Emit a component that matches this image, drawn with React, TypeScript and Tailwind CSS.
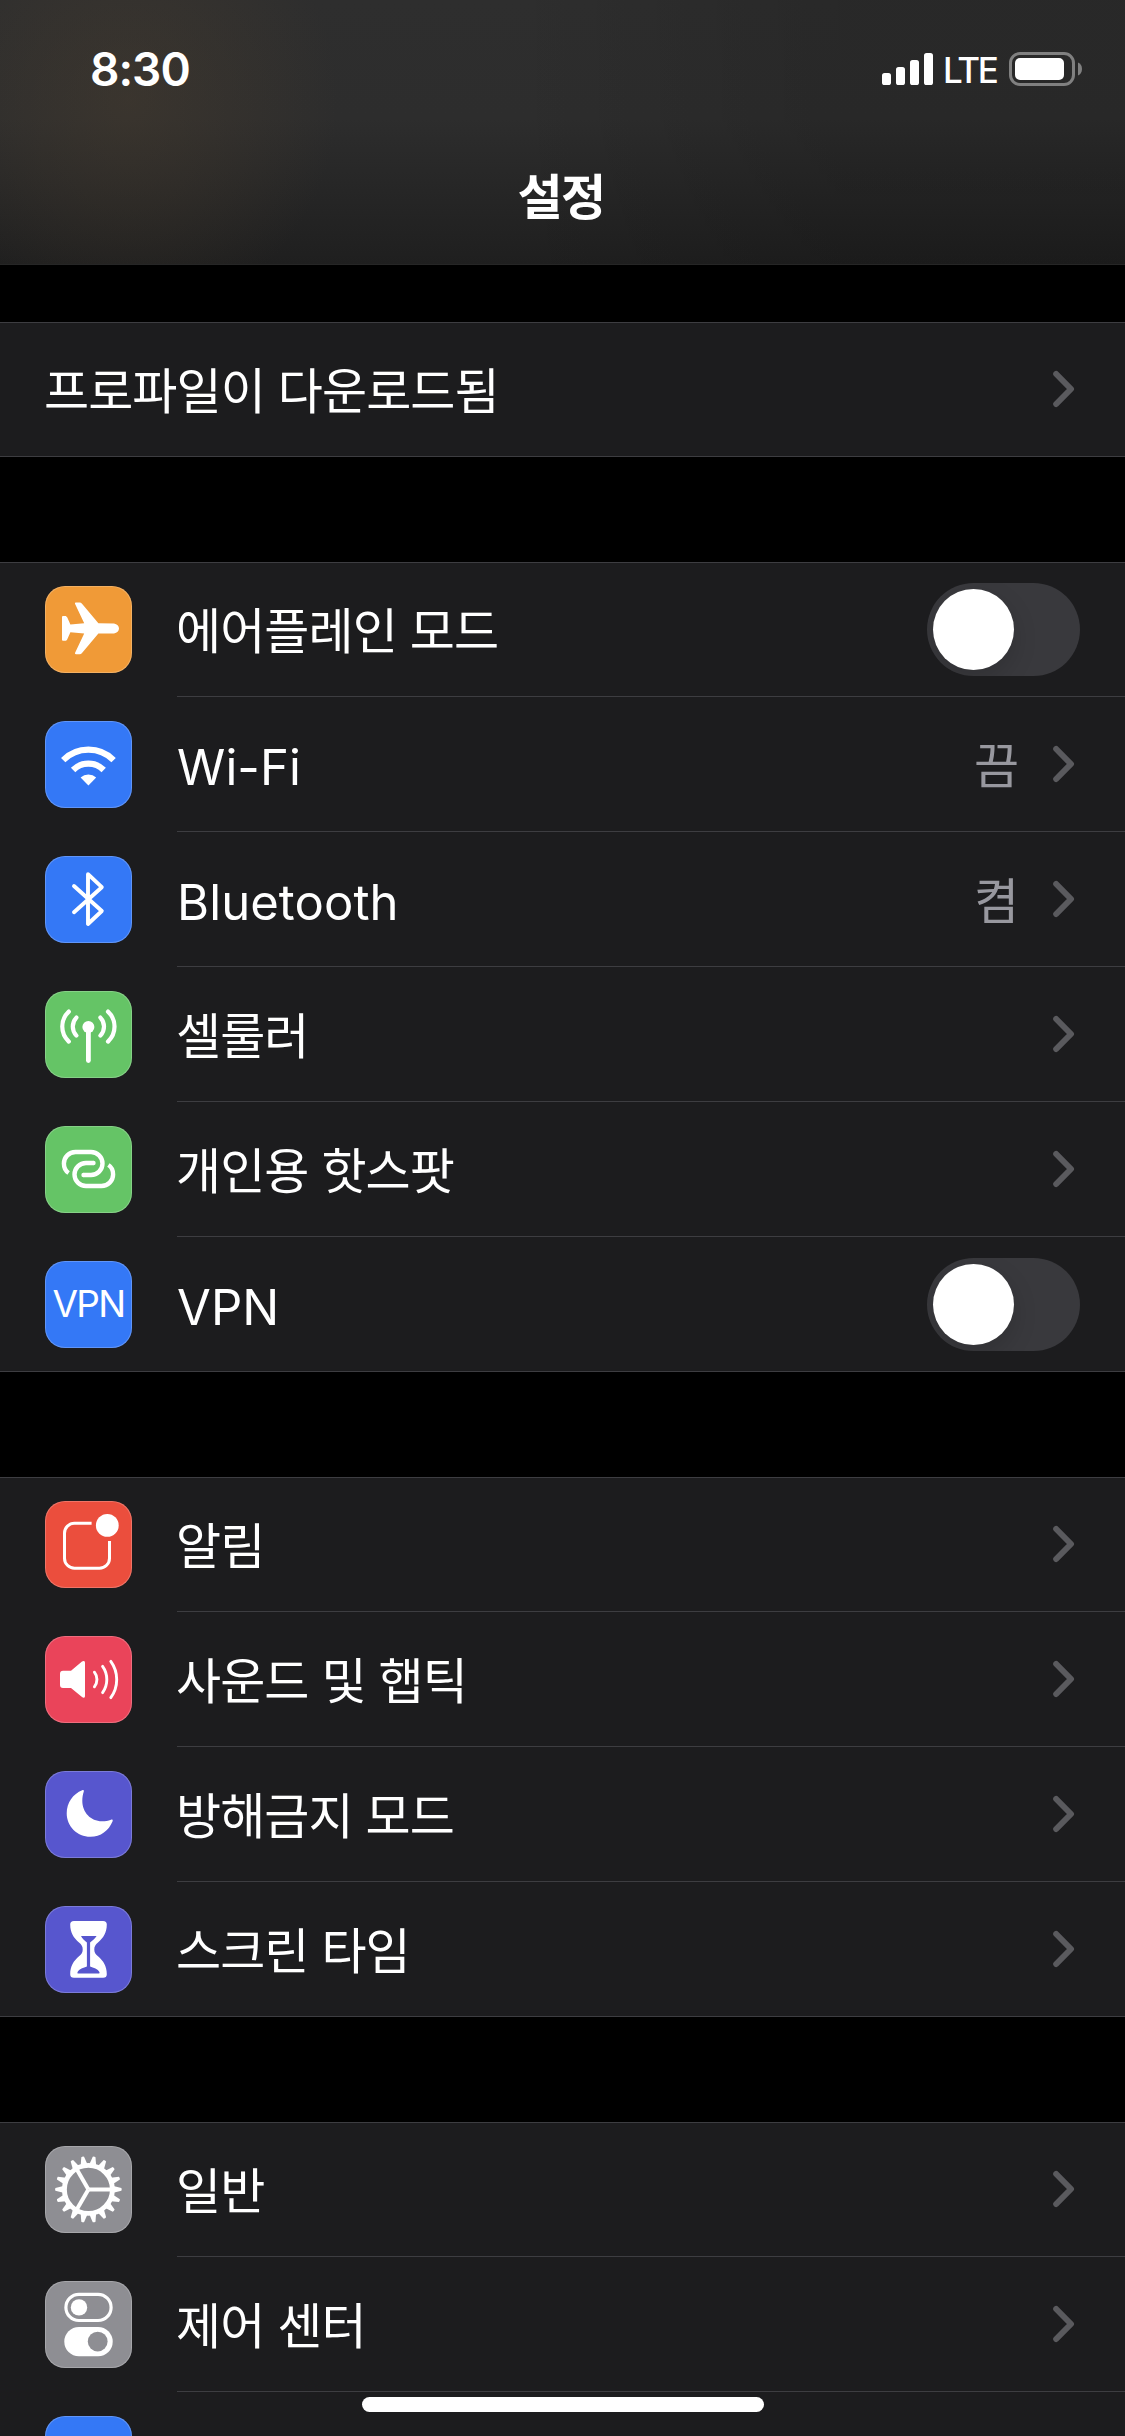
import React, { useState } from 'react';

type Item = {
  id: string;
  label: string;
  icon?: React.ReactNode;
  color?: string;
  value?: string;
  toggle?: boolean;
  latin?: boolean;
  noChevron?: boolean;
};

const GEAR_TEETH = Array.from({ length: 18 }, (_, i) => i * 20);

function Glyph({ children }: { children: React.ReactNode }) {
  return (
    <svg viewBox="0 0 87 87" className="w-[87px] h-[87px]" fill="none" stroke="none">
      {children}
    </svg>
  );
}

const AirplaneIcon = (
  <Glyph>
    <path
      fill="#fff"
      d="M69 37.4C72 37.9 74 40 74 42.4S72 46.9 69 47.4L53.4 47.5L37 67C36.4 67.8 35.6 68.2 34.6 68.2H31C30.1 68.2 29.8 67.6 30.1 66.8L39.2 47.5L25.4 46.3L22.3 53.2C21.8 54.3 21 54.8 20 54.8H18.3C17.5 54.8 17 54.3 17 53.5V31.3C17 30.5 17.5 30 18.3 30H20C21 30 21.8 30.5 22.3 31.6L25.4 38.5L39.2 37.3L30.1 18C29.8 17.2 30.1 16.6 31 16.6H34.6C35.6 16.6 36.4 17 37 17.8L53.4 37.3Z"
    />
  </Glyph>
);

const WifiIcon = (
  <Glyph>
    <g stroke="#fff" strokeWidth="6.2">
      <path d="M18.2 39.1A35.6 35.6 0 0 1 68.6 39.1" />
      <path d="M28.1 49A21.6 21.6 0 0 1 58.7 49" />
    </g>
    <path fill="#fff" d="M43.4 64.4L35.6 56.6A11.4 11.4 0 0 1 51.2 56.6Z" />
  </Glyph>
);

const BluetoothIcon = (
  <Glyph>
    <path
      stroke="#fff"
      strokeWidth="3.9"
      strokeLinecap="round"
      strokeLinejoin="round"
      d="M29 30L56.8 55L43 68V18.2L56.8 31.2L29 56.2"
    />
  </Glyph>
);

const CellularIcon = (
  <Glyph>
    <circle cx="43.4" cy="36" r="6" fill="#fff" />
    <g stroke="#fff" strokeWidth="4.2" strokeLinecap="round">
      <path strokeWidth="4.8" d="M43.4 38V69.6" />
      <path d="M55.4 26.6A13 13 0 0 1 55.4 44.6" />
      <path d="M31.4 26.6A13 13 0 0 0 31.4 44.6" />
      <path d="M63 20.6A20.5 20.5 0 0 1 63 50.6" />
      <path d="M23.8 20.6A20.5 20.5 0 0 0 23.8 50.6" />
    </g>
  </Glyph>
);

const HotspotIcon = (
  <Glyph>
    <g stroke="#fff" strokeWidth="4.4">
      <path d="M23.6 47C20.5 45 18.9 41.5 18.9 37.6A11.6 11.6 0 0 1 30.5 26H46A11.5 11.5 0 0 1 46 49H38.5" />
      <path d="M63.4 39C66.5 41 68.1 44.5 68.1 48.4A11.6 11.6 0 0 1 56.5 60H41A11.5 11.5 0 0 1 41 37H48.5" />
    </g>
    <circle cx="38.5" cy="49" r="2.2" fill="#fff" />
    <circle cx="48.5" cy="37" r="2.2" fill="#fff" />
  </Glyph>
);

const VpnIcon = <span className="mb-0.5 text-[37px] leading-none tracking-[-1.7px] text-white">VPN</span>;

const NotificationsIcon = (
  <Glyph>
    <path
      stroke="#fff"
      strokeWidth="3"
      d="M46.6 22.2H29.5A10 10 0 0 0 19.5 32.2V57.2A10 10 0 0 0 29.5 67.2H54.5A10 10 0 0 0 64.5 57.2V40"
    />
    <circle cx="62.3" cy="24.4" r="11.4" fill="#fff" />
  </Glyph>
);

const SoundIcon = (
  <Glyph>
    <path
      fill="#fff"
      d="M18 34.7H26L37 25.6C38.6 24.4 40 25 40 26.8V60C40 61.8 38.6 62.3 37 61.1L26 52H18C16 52 15 51 15 49V37.7C15 35.7 16 34.7 18 34.7Z"
    />
    <g stroke="#fff" strokeWidth="2.9" strokeLinecap="round">
      <path d="M49.4 36.2A11.8 11.8 0 0 1 49.4 50.8" />
      <path d="M57.6 30.4A22.5 22.5 0 0 1 57.6 56.6" />
      <path d="M65.8 25.3A31 31 0 0 1 65.8 61.7" />
    </g>
  </Glyph>
);

const MoonIcon = (
  <Glyph>
    <path
      fill="#fff"
      d="M37.2 19.2C38.4 18.7 39.2 19.5 38.8 20.6C37.8 23.4 37.3 26.4 37.3 29.8C37.3 41.4 45.6 50.3 57 50.3C60.4 50.3 63.2 49.8 66 48.7C67.3 48.2 68.1 49 67.6 50.2C63.8 59.6 55.6 65.8 45.4 65.8C32.2 65.8 21.7 55.4 21.7 42.2C21.7 31.8 28 22.8 37.2 19.2Z"
    />
  </Glyph>
);

const HourglassIcon = (
  <Glyph>
    <path
      fill="#fff"
      d="M29 15H58C60.6 15 61.8 16.2 61.8 18.6C61.8 26.6 58.4 32 53 36.6C50.4 38.8 49.3 40.6 49.3 43.4S50.4 48 53 50.2C58.4 54.8 61.8 60.2 61.8 68.2C61.8 70.6 60.6 71.8 58 71.8H29C26.4 71.8 25.2 70.6 25.2 68.2C25.2 60.2 28.6 54.8 34 50.2C36.6 48 37.7 46.2 37.7 43.4S36.6 38.8 34 36.6C28.6 32 25.2 26.6 25.2 18.6C25.2 16.2 26.4 15 29 15Z"
    />
    <path
      fill="#5756ce"
      d="M36 30H51.6C50.2 32.6 47.4 34.4 45.1 36.4V60.4C48.4 61.8 53 62.8 54.4 66C54.8 67 54.4 67.6 53.4 67.6H33.4C32.4 67.6 32.2 67 32.6 66C34 62.8 38.6 61.8 41.9 60.4V36.4C39.6 34.4 37 32.6 36 30Z"
    />
  </Glyph>
);

const GearIcon = (
  <Glyph>
    <g transform="translate(43.4 43.4)">
      {GEAR_TEETH.map((a) => (
        <path key={a} fill="#fff" d="M25 -3.4L33 -1.4Q33.6 0 33 1.4L25 3.4Z" transform={`rotate(${a})`} />
      ))}
      <circle r="24" stroke="#fff" strokeWidth="4.9" />
      <g stroke="#fff" strokeWidth="4">
        <path d="M0 0H23" />
        <path d="M0 0H23" transform="rotate(120)" />
        <path d="M0 0H23" transform="rotate(240)" />
      </g>
    </g>
  </Glyph>
);

const ControlCenterIcon = (
  <Glyph>
    <rect x="20.9" y="13.3" width="45.2" height="26.2" rx="13.1" stroke="#fff" strokeWidth="3.2" />
    <circle cx="34" cy="26.4" r="8.2" fill="#fff" />
    <rect x="19.3" y="46" width="48.4" height="29.3" rx="14.6" fill="#fff" />
    <circle cx="52.7" cy="60.6" r="9.9" fill="#8e8e93" />
  </Glyph>
);

const groups: Item[][] = [
  [{ id: 'profile', label: '프로파일이 다운로드됨' }],
  [
    { id: 'airplane', label: '에어플레인 모드', icon: AirplaneIcon, color: 'bg-[#f09a37]', toggle: true },
    { id: 'wifi', label: 'Wi-Fi', icon: WifiIcon, color: 'bg-[#3478f6]', value: '끔', latin: true },
    { id: 'bluetooth', label: 'Bluetooth', icon: BluetoothIcon, color: 'bg-[#3478f6]', value: '켬', latin: true },
    { id: 'cellular', label: '셀룰러', icon: CellularIcon, color: 'bg-[#65c466]' },
    { id: 'hotspot', label: '개인용 핫스팟', icon: HotspotIcon, color: 'bg-[#65c466]' },
    { id: 'vpn', label: 'VPN', icon: VpnIcon, color: 'bg-[#3478f6]', toggle: true, latin: true },
  ],
  [
    { id: 'notifications', label: '알림', icon: NotificationsIcon, color: 'bg-[#eb4e3d]' },
    { id: 'sounds', label: '사운드 및 햅틱', icon: SoundIcon, color: 'bg-[#ea445a]' },
    { id: 'dnd', label: '방해금지 모드', icon: MoonIcon, color: 'bg-[#5756ce]' },
    { id: 'screentime', label: '스크린 타임', icon: HourglassIcon, color: 'bg-[#5756ce]' },
  ],
  [
    { id: 'general', label: '일반', icon: GearIcon, color: 'bg-[#8e8e93]' },
    { id: 'control', label: '제어 센터', icon: ControlCenterIcon, color: 'bg-[#8e8e93]' },
    { id: 'display', label: '', icon: <span />, color: 'bg-[#3478f6]', noChevron: true },
  ],
];

function Chevron() {
  return (
    <svg viewBox="0 0 23 38" className="w-[23px] h-[38px] mr-[50px] mb-0.5" fill="none">
      <path d="M4.2 4L19 19L4.2 34" stroke="#5a5a5e" strokeWidth="6" strokeLinecap="round" strokeLinejoin="round" />
    </svg>
  );
}

function Toggle({ on, onChange }: { on: boolean; onChange: () => void }) {
  return (
    <button
      onClick={onChange}
      className={`w-[153px] h-[93px] mr-[45px] p-1.5 rounded-full flex items-center overflow-hidden ${on ? 'bg-[#65c466] justify-end' : 'bg-[#39393d] justify-start'}`}
    >
      <span className="w-[81px] h-[81px] rounded-full bg-white shadow-[0_9px_24px_rgba(0,0,0,0.15)]" />
    </button>
  );
}

function Row({ item, last, on, onToggle }: { item: Item; last: boolean; on: boolean; onToggle: () => void }) {
  return (
    <div className="h-[135px] pl-[45px] flex items-center">
      {item.icon && (
        <div className={`w-[87px] h-[87px] mr-[45px] shrink-0 rounded-[20px] flex items-center justify-center overflow-hidden shadow-[inset_0_0_0_1px_rgba(255,255,255,0.22)] ${item.color}`}>
          {item.icon}
        </div>
      )}
      <div className={`flex-1 h-full flex items-center ${last ? '' : 'shadow-[inset_0_-1px_0_#3d3d41]'}`}>
        <span className={`flex-1 leading-[60px] text-white whitespace-nowrap ${item.latin ? 'pt-1.5 text-[49px] tracking-[0.1px]' : '-ml-px pt-1 text-[49px] tracking-[-0.9px]'}`}>
          {item.label}
        </span>
        {item.value && <span className="mr-[33px] pt-1 text-[49px] leading-[60px] text-[#98989f]">{item.value}</span>}
        {item.toggle ? <Toggle on={on} onChange={onToggle} /> : !item.noChevron && <Chevron />}
      </div>
    </div>
  );
}

function StatusBar() {
  return (
    <div className="h-[132px] pt-[52px] pl-[90px] pr-[42px] flex items-start justify-between">
      <span className="text-[46px] leading-[34px] font-semibold tracking-[-1px] text-white">8:30</span>
      <div className="flex items-start">
        <svg viewBox="0 0 51 34" className="w-[51px] h-[34px]" fill="#fff">
          <rect x="0" y="21" width="9" height="12" rx="2.6" />
          <rect x="14" y="15" width="9" height="18" rx="2.6" />
          <rect x="28" y="8" width="9" height="25" rx="2.6" />
          <rect x="42" y="1" width="9" height="32" rx="2.6" />
        </svg>
        <span className="ml-[10px] w-[56px] mr-[10px] pt-px text-[35px] leading-[34px] font-medium tracking-[-2.3px] text-white">LTE</span>
        <svg viewBox="0 0 74 34" className="w-[74px] h-[34px]">
          <rect x="1.5" y="1.5" width="63" height="31" rx="9.5" fill="none" stroke="#808080" strokeWidth="3" />
          <rect x="6" y="6" width="49" height="22" rx="5" fill="#fff" />
          <path d="M69 10.5C71.6 11.6 73 14 73 17S71.6 22.4 69 23.5Z" fill="#808080" />
        </svg>
      </div>
    </div>
  );
}

export default function SettingsScreen() {
  const [toggles, setToggles] = useState<Record<string, boolean>>({
    airplane: false,
    vpn: false
  });

  return (
    <div lang="ko" className="relative w-[1125px] h-[2436px] overflow-hidden bg-black font-['Inter','Noto_Sans_CJK_KR',sans-serif]">
      <header className="h-[265px] border-b border-[#262626] bg-[radial-gradient(ellipse_210px_220px_at_128px_100px,rgba(76,63,47,0.42),rgba(76,63,47,0.22)_50%,transparent),linear-gradient(to_right,transparent_45%,rgba(0,0,0,0.12)_75%),linear-gradient(to_bottom,#2e2e2e,#2d2d2d_45%,#1f1f1f)]">
        <StatusBar />
        <h1 className="h-[132px] pr-[3px] flex items-center justify-center text-[49px] leading-[60px] font-bold tracking-[-1.5px] text-white">
          설정
        </h1>
      </header>

      <main className="pt-[57px] flex flex-col gap-[105px]">
        {groups.map((items) => (
          <section
            key={items[0].id}
            className="bg-[#1c1c1e] shadow-[inset_0_1px_0_#3d3d41,inset_0_-1px_0_#3d3d41]"
          >
            {items.map((item, i) => (
              <Row
                key={item.id}
                item={item}
                last={i === items.length - 1}
                on={!!toggles[item.id]}
                onToggle={() => setToggles(prev => ({ ...prev, [item.id]: !prev[item.id] }))}
              />
            ))}
          </section>
        ))}
      </main>

      {/* Home indicator */}
      <div className="absolute left-[362px] top-[2397px] w-[402px] h-[15px] rounded-full bg-white" />
    </div>
  );
}
